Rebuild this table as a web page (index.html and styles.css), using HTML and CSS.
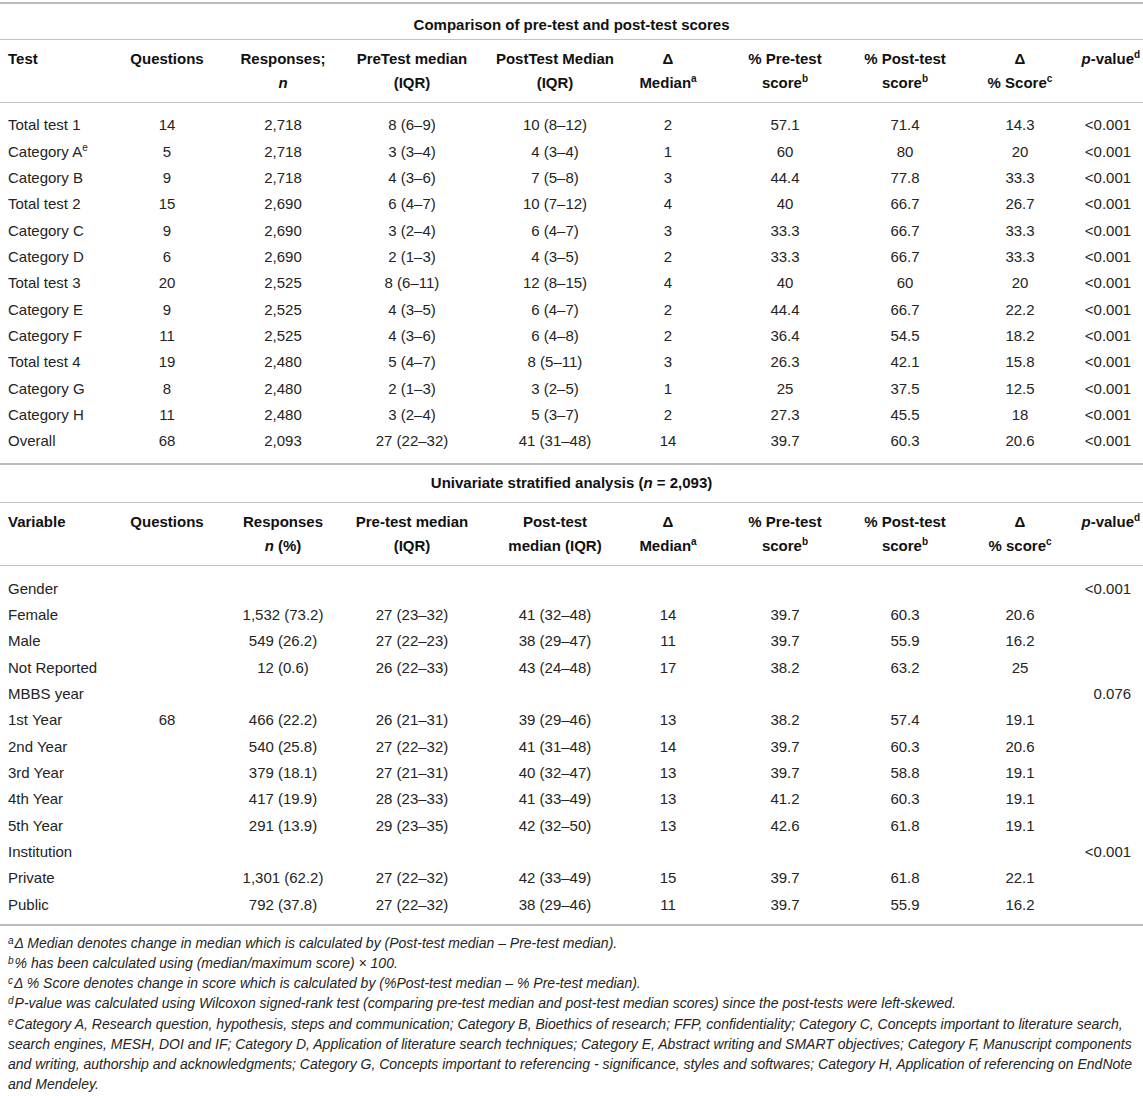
FILE: index.html
```html
<!DOCTYPE html>
<html lang="en">
<head>
<meta charset="utf-8">
<title>Comparison of pre-test and post-test scores</title>
<link rel="stylesheet" href="styles.css">
</head>
<body>
<table class="data">
  <colgroup>
    <col class="c1"><col class="c2"><col class="c3"><col class="c4"><col class="c5">
    <col class="c6"><col class="c7"><col class="c8"><col class="c9"><col class="c10">
  </colgroup>
  <tbody>
    <tr class="title-row first-title"><td class="title" colspan="10">Comparison of pre-test and post-test scores</td></tr>
    <tr class="head-row">
      <th>Test</th>
      <th>Questions</th>
      <th>Responses;<br><i>n</i></th>
      <th>PreTest median<br>(IQR)</th>
      <th>PostTest Median<br>(IQR)</th>
      <th>Δ<br>Median<sup>a</sup></th>
      <th>% Pre-test<br>score<sup>b</sup></th>
      <th>% Post-test<br>score<sup>b</sup></th>
      <th>Δ<br>% Score<sup>c</sup></th>
      <th><i>p</i>-value<sup>d</sup></th>
    </tr>
    <tr class="first"><td>Total test 1</td><td>14</td><td>2,718</td><td>8 (6–9)</td><td>10 (8–12)</td><td>2</td><td>57.1</td><td>71.4</td><td>14.3</td><td>&lt;0.001</td></tr>
    <tr><td>Category A<sup>e</sup></td><td>5</td><td>2,718</td><td>3 (3–4)</td><td>4 (3–4)</td><td>1</td><td>60</td><td>80</td><td>20</td><td>&lt;0.001</td></tr>
    <tr><td>Category B</td><td>9</td><td>2,718</td><td>4 (3–6)</td><td>7 (5–8)</td><td>3</td><td>44.4</td><td>77.8</td><td>33.3</td><td>&lt;0.001</td></tr>
    <tr><td>Total test 2</td><td>15</td><td>2,690</td><td>6 (4–7)</td><td>10 (7–12)</td><td>4</td><td>40</td><td>66.7</td><td>26.7</td><td>&lt;0.001</td></tr>
    <tr><td>Category C</td><td>9</td><td>2,690</td><td>3 (2–4)</td><td>6 (4–7)</td><td>3</td><td>33.3</td><td>66.7</td><td>33.3</td><td>&lt;0.001</td></tr>
    <tr><td>Category D</td><td>6</td><td>2,690</td><td>2 (1–3)</td><td>4 (3–5)</td><td>2</td><td>33.3</td><td>66.7</td><td>33.3</td><td>&lt;0.001</td></tr>
    <tr><td>Total test 3</td><td>20</td><td>2,525</td><td>8 (6–11)</td><td>12 (8–15)</td><td>4</td><td>40</td><td>60</td><td>20</td><td>&lt;0.001</td></tr>
    <tr><td>Category E</td><td>9</td><td>2,525</td><td>4 (3–5)</td><td>6 (4–7)</td><td>2</td><td>44.4</td><td>66.7</td><td>22.2</td><td>&lt;0.001</td></tr>
    <tr><td>Category F</td><td>11</td><td>2,525</td><td>4 (3–6)</td><td>6 (4–8)</td><td>2</td><td>36.4</td><td>54.5</td><td>18.2</td><td>&lt;0.001</td></tr>
    <tr><td>Total test 4</td><td>19</td><td>2,480</td><td>5 (4–7)</td><td>8 (5–11)</td><td>3</td><td>26.3</td><td>42.1</td><td>15.8</td><td>&lt;0.001</td></tr>
    <tr><td>Category G</td><td>8</td><td>2,480</td><td>2 (1–3)</td><td>3 (2–5)</td><td>1</td><td>25</td><td>37.5</td><td>12.5</td><td>&lt;0.001</td></tr>
    <tr><td>Category H</td><td>11</td><td>2,480</td><td>3 (2–4)</td><td>5 (3–7)</td><td>2</td><td>27.3</td><td>45.5</td><td>18</td><td>&lt;0.001</td></tr>
    <tr class="last"><td>Overall</td><td>68</td><td>2,093</td><td>27 (22–32)</td><td>41 (31–48)</td><td>14</td><td>39.7</td><td>60.3</td><td>20.6</td><td>&lt;0.001</td></tr>

    <tr class="title-row second-title"><td class="title" colspan="10">Univariate stratified analysis (<i>n</i> = 2,093)</td></tr>
    <tr class="head-row">
      <th>Variable</th>
      <th>Questions</th>
      <th>Responses<br><i>n</i> (%)</th>
      <th>Pre-test median<br>(IQR)</th>
      <th>Post-test<br>median (IQR)</th>
      <th>Δ<br>Median<sup>a</sup></th>
      <th>% Pre-test<br>score<sup>b</sup></th>
      <th>% Post-test<br>score<sup>b</sup></th>
      <th>Δ<br>% score<sup>c</sup></th>
      <th><i>p</i>-value<sup>d</sup></th>
    </tr>
    <tr class="first"><td>Gender</td><td></td><td></td><td></td><td></td><td></td><td></td><td></td><td></td><td>&lt;0.001</td></tr>
    <tr><td>Female</td><td></td><td>1,532 (73.2)</td><td>27 (23–32)</td><td>41 (32–48)</td><td>14</td><td>39.7</td><td>60.3</td><td>20.6</td><td></td></tr>
    <tr><td>Male</td><td></td><td>549 (26.2)</td><td>27 (22–23)</td><td>38 (29–47)</td><td>11</td><td>39.7</td><td>55.9</td><td>16.2</td><td></td></tr>
    <tr><td>Not Reported</td><td></td><td>12 (0.6)</td><td>26 (22–33)</td><td>43 (24–48)</td><td>17</td><td>38.2</td><td>63.2</td><td>25</td><td></td></tr>
    <tr><td>MBBS year</td><td></td><td></td><td></td><td></td><td></td><td></td><td></td><td></td><td>0.076</td></tr>
    <tr><td>1st Year</td><td>68</td><td>466 (22.2)</td><td>26 (21–31)</td><td>39 (29–46)</td><td>13</td><td>38.2</td><td>57.4</td><td>19.1</td><td></td></tr>
    <tr><td>2nd Year</td><td></td><td>540 (25.8)</td><td>27 (22–32)</td><td>41 (31–48)</td><td>14</td><td>39.7</td><td>60.3</td><td>20.6</td><td></td></tr>
    <tr><td>3rd Year</td><td></td><td>379 (18.1)</td><td>27 (21–31)</td><td>40 (32–47)</td><td>13</td><td>39.7</td><td>58.8</td><td>19.1</td><td></td></tr>
    <tr><td>4th Year</td><td></td><td>417 (19.9)</td><td>28 (23–33)</td><td>41 (33–49)</td><td>13</td><td>41.2</td><td>60.3</td><td>19.1</td><td></td></tr>
    <tr><td>5th Year</td><td></td><td>291 (13.9)</td><td>29 (23–35)</td><td>42 (32–50)</td><td>13</td><td>42.6</td><td>61.8</td><td>19.1</td><td></td></tr>
    <tr><td>Institution</td><td></td><td></td><td></td><td></td><td></td><td></td><td></td><td></td><td>&lt;0.001</td></tr>
    <tr><td>Private</td><td></td><td>1,301 (62.2)</td><td>27 (22–32)</td><td>42 (33–49)</td><td>15</td><td>39.7</td><td>61.8</td><td>22.1</td><td></td></tr>
    <tr class="last final"><td>Public</td><td></td><td>792 (37.8)</td><td>27 (22–32)</td><td>38 (29–46)</td><td>11</td><td>39.7</td><td>55.9</td><td>16.2</td><td></td></tr>
  </tbody>
</table>

<div class="notes">
  <p><sup>a</sup>Δ Median denotes change in median which is calculated by (Post-test median – Pre-test median).</p>
  <p><sup>b</sup>% has been calculated using (median/maximum score) × 100.</p>
  <p><sup>c</sup>Δ % Score denotes change in score which is calculated by (%Post-test median – % Pre-test median).</p>
  <p><sup>d</sup>P-value was calculated using Wilcoxon signed-rank test (comparing pre-test median and post-test median scores) since the post-tests were left-skewed.</p>
  <p><sup>e</sup>Category A, Research question, hypothesis, steps and communication; Category B, Bioethics of research; FFP, confidentiality; Category C, Concepts important to literature search, search engines, MESH, DOI and IF; Category D, Application of literature search techniques; Category E, Abstract writing and SMART objectives; Category F, Manuscript components and writing, authorship and acknowledgments; Category G, Concepts important to referencing - significance, styles and softwares; Category H, Application of referencing on EndNote and Mendeley.</p>
</div>
</body>
</html>
```

FILE: styles.css
```css
html, body {
  margin: 0;
  padding: 0;
  background: #ffffff;
}

body {
  font-family: "Liberation Sans", Arial, Helvetica, sans-serif;
  color: #242424;
  font-size: 15px;
}

.data {
  width: 1143px;
  table-layout: fixed;
  border-collapse: separate;
  border-spacing: 0;
  margin-top: 2px;
  border-top: 2px solid #bcbcbc;
}

.c1 { width: 117px; }
.c2 { width: 100px; }
.c3 { width: 132px; }
.c4 { width: 126px; }
.c5 { width: 160px; }
.c6 { width: 66px; }
.c7 { width: 149px; }
.c8 { width: 110px; }
.c9 { width: 110px; }
.c10 { width: 73px; }

.data td,
.data th {
  padding: 3.18px 0;
  line-height: 20px;
  text-align: center;
  vertical-align: top;
  white-space: nowrap;
  font-weight: normal;
}

.data td:nth-child(1),
.data th:nth-child(1) {
  text-align: left;
  padding-left: 8px;
}

.data td:nth-child(7),
.data th:nth-child(7) {
  padding-left: 19px;
}

.data td:nth-child(9),
.data th:nth-child(9) {
  padding-left: 10px;
}

.data td:nth-child(10) {
  text-align: right;
  padding-right: 12px;
}

.data th:nth-child(10) {
  text-align: right;
  padding-right: 3px;
}

.data th {
  font-weight: bold;
  color: #111111;
  line-height: 24px;
  padding-top: 7px;
  padding-bottom: 7px;
  border-bottom: 1px solid #c4c4c4;
}

.data td.title {
  text-align: center;
  font-weight: bold;
  color: #111111;
  padding: 11px 0 4px 0;
  border-bottom: 1px solid #c4c4c4;
}

.second-title td.title {
  border-top: 2px solid #bcbcbc;
  padding-top: 8px;
  padding-bottom: 9px;
}

.data tr.first td {
  padding-top: 12.18px;
}

.data tr.last td {
  padding-bottom: 12.18px;
}

.data tr.final td {
  padding-bottom: 9px;
  border-bottom: 2px solid #bcbcbc;
}

sup {
  font-size: 10px;
  line-height: 0;
  vertical-align: 6px;
}

.notes {
  padding: 7px 5px 0 8px;
  font-style: italic;
  font-size: 14px;
  line-height: 20.2px;
  color: #242424;
}

.notes p {
  margin: 0;
}

.notes sup {
  font-size: 10px;
  line-height: 0;
  vertical-align: 4px;
  margin-right: 1px;
}
```
